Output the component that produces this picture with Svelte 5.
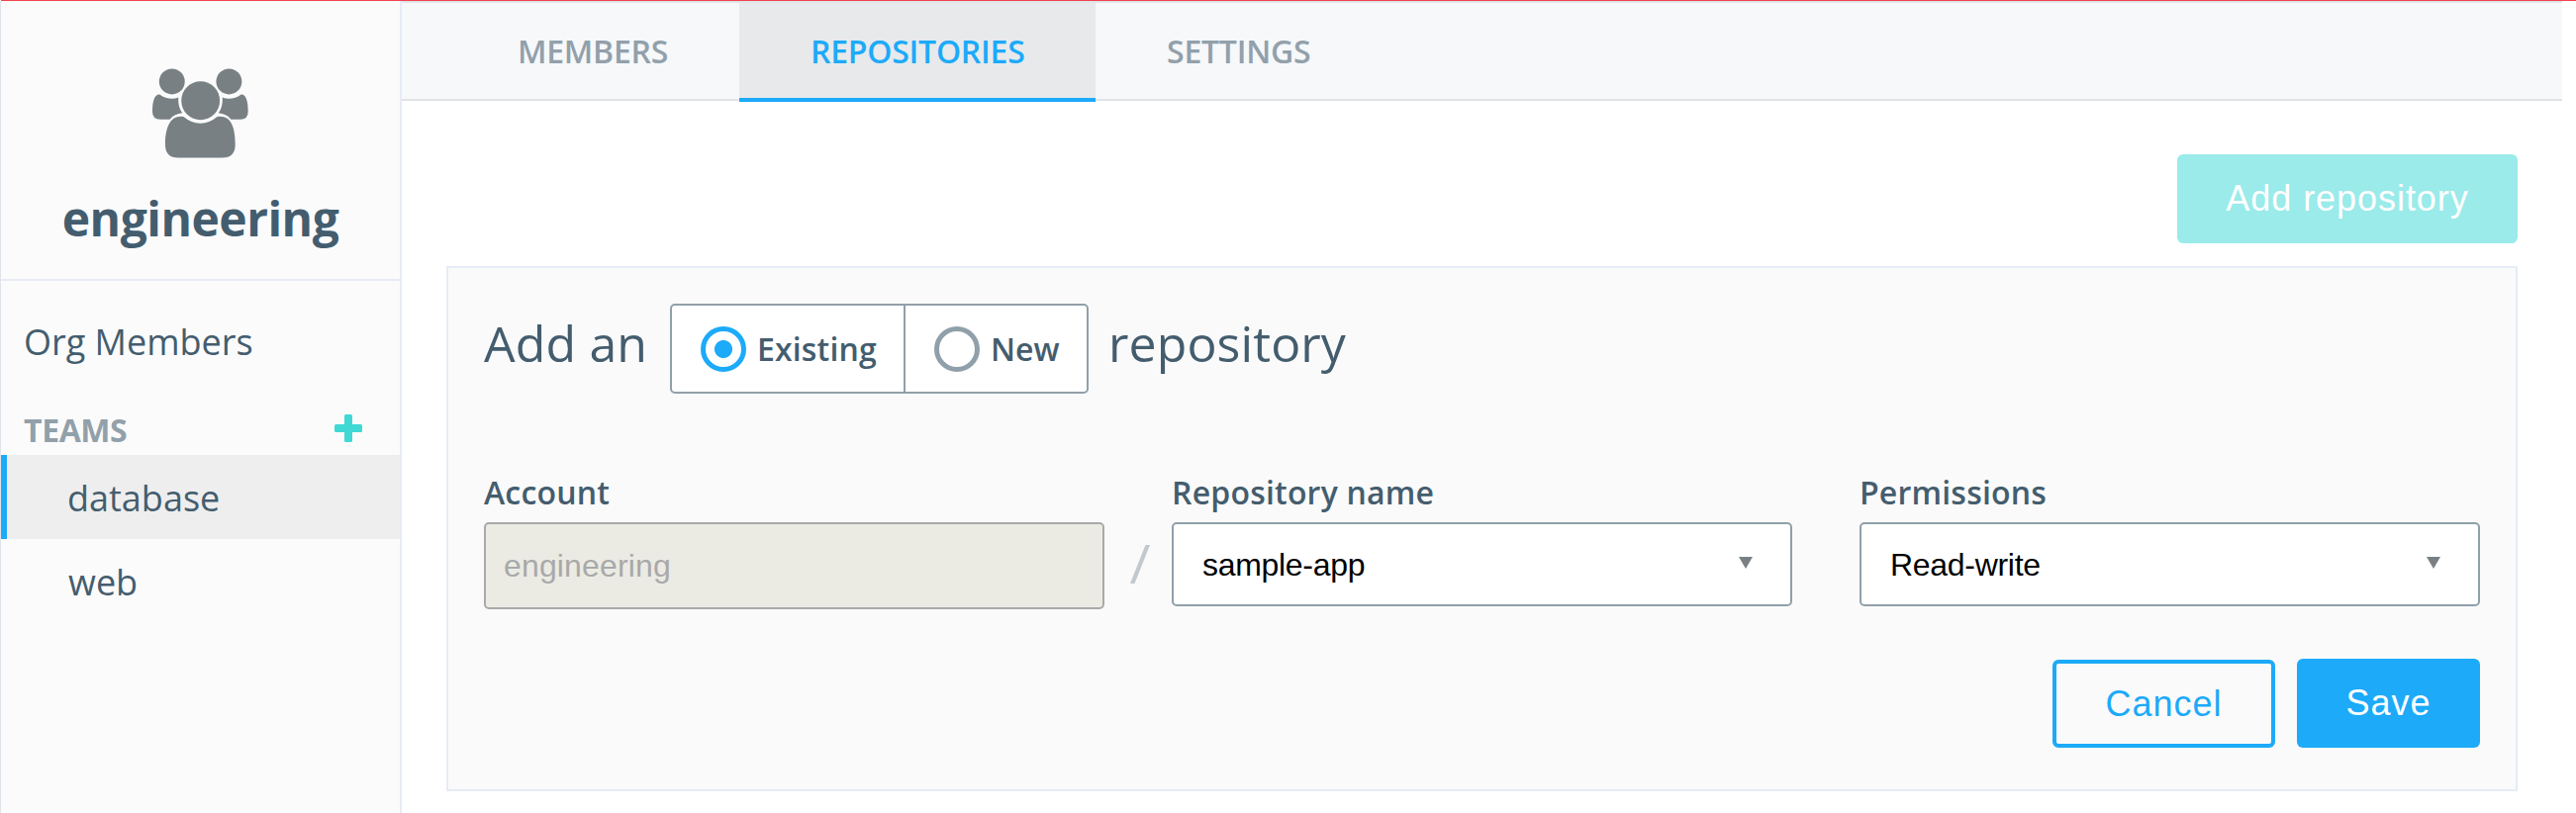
<script>
  const teams = ['database', 'web'];
  const tabs = ['MEMBERS', 'REPOSITORIES', 'SETTINGS'];
  let activeTeam = $state('database');
  let activeTab = $state('REPOSITORIES');
  let mode = $state('Existing');
</script>

<div class="page">
  <aside>
    <div class="org">
      <svg class="people" viewBox="462 208 292 273" fill="#788084">
        <circle cx="521.5" cy="248" r="39" />
        <circle cx="695" cy="248" r="39" />
        <circle cx="608.500" cy="306" r="58.500" />
        <path d="M484 287 Q502 300 521 300 Q532 300 541 296 Q539 324 553 344 Q529 346 515 363 H486 Q462 363 462 340 C462 310 467 286 484 287Z" />
        <path d="M732 287 Q714 300 695 300 Q684 300 675 296 Q677 324 663 344 Q687 346 701 363 H730 Q753 363 753 340 C753 310 748 286 732 287Z" />
        <path d="M557 355 Q580 375 608 375 Q636 375 659 355 C700 348 714 385 714 440 Q714 480 674 480 H541 Q501 480 501 440 C501 385 518 348 557 355Z" />
      </svg>
      <h1>engineering</h1>
    </div>
    <nav>
      <a class="members" href="#members">Org Members</a>
      <div class="teams-head">
        <span>TEAMS</span>
        <svg viewBox="0 0 28 28" width="28" height="28" fill="#3fd8d5">
          <rect x="10" y="0" width="8" height="28" rx="1.500" />
          <rect x="0" y="10" width="28" height="8" rx="1.500" />
        </svg>
      </div>
      {#each teams as team}
        <button class="team" class:active={team === activeTeam} onclick={() => (activeTeam = team)}>{team}</button>
      {/each}
    </nav>
  </aside>

  <main>
    <div class="tabs">
      {#each tabs as tab}
        <button class="tab" class:active={tab === activeTab} onclick={() => (activeTab = tab)}>{tab}</button>
      {/each}
    </div>

    <div class="content">
      <button class="add">Add repository</button>
      <section>
        <div class="heading">
          <span class="add-an">Add an</span>
          <div class="toggle">
            <button class="option first" onclick={() => (mode = 'Existing')}>
              <i class="radio" class:checked={mode === 'Existing'}></i><span>Existing</span>
            </button>
            <button class="option" onclick={() => (mode = 'New')}>
              <i class="radio" class:checked={mode === 'New'}></i><span>New</span>
            </button>
          </div>
          <span class="repository">repository</span>
        </div>

        <div class="fields">
          <div class="field">
            <span class="label">Account</span>
            <div class="box disabled">engineering</div>
          </div>
          <svg class="slash" viewBox="0 0 20 39" width="20" height="39">
            <path d="M15.500 0 H20 L4.500 39 H0Z" fill="#c1c9ce" />
          </svg>
          <div class="field">
            <span class="label">Repository name</span>
            <div class="box select">
              <span>sample-app</span>
              <svg viewBox="0 0 14 12" width="14" height="12"><path d="M0 0H14L7 12Z" fill="#788084" /></svg>
            </div>
          </div>
          <div class="field last">
            <span class="label">Permissions</span>
            <div class="box select">
              <span>Read-write</span>
              <svg viewBox="0 0 14 12" width="14" height="12"><path d="M0 0H14L7 12Z" fill="#788084" /></svg>
            </div>
          </div>
        </div>

        <div class="actions">
          <button class="cancel">Cancel</button>
          <button class="save">Save</button>
        </div>
      </section>
    </div>
  </main>
</div>

<style>
  * { box-sizing: border-box; }
  :global(body) { background: #fff; overflow: hidden; }
  button { margin: 0; padding: 0; border: 0; background: none; text-align: left; white-space: nowrap; }
  .page {
    display: flex;
    height: 822px;
    background: linear-gradient(#f0444f, #f0444f) 1px 0 / 100% 1px no-repeat;
    padding-top: 1px;
    font-family: "Open Sans", sans-serif;
    color: #445d6e;
  }
  aside {
    width: 406px;
    flex: none;
    background: #fbfbfb;
    border-left: 1px solid #dfe3ea;
    border-right: 2px solid #e6ebf5;
  }
  .org {
    height: 283px;
    padding-top: 68px;
    border-bottom: 2px solid #e6ebf5;
    display: flex;
    flex-direction: column;
    align-items: center;
  }
  .people { width: 97px; height: 91px; display: block; }
  h1 { margin: 28px 0 0; font-size: 48px; font-weight: 700; line-height: 66px; letter-spacing: -0.5px; }
  nav { display: flex; flex-direction: column; }
  .members {
    margin-top: 38px;
    padding-left: 23px;
    font-size: 36px;
    line-height: 48px;
    color: inherit;
    text-decoration: none;
  }
  .teams-head {
    display: flex;
    justify-content: space-between;
    margin-top: 43px;
    padding: 0 38px 0 23px;
    height: 47px;
    font-size: 32px;
    font-weight: 700;
    line-height: 44px;
    letter-spacing: -0.4px;
    color: #92a0aa;
  }
  .teams-head svg { margin-top: 6px; }
  .team {
    height: 85px;
    padding-left: 68px;
    font: 36px/87px "Open Sans", sans-serif;
    color: inherit;
  }
  .team.active { background: #eee; border-left: 6px solid #1caaf9; padding-left: 61px; }

  main { flex: 1; display: flex; flex-direction: column; }
  .tabs {
    display: flex;
    width: 2183px;
    height: 101px;
    padding-left: 45px;
    background: #f6f8fa;
    border-top: 2px solid #e3e5e8;
    border-bottom: 2px solid #e1e4e6;
  }
  .tab {
    height: 100px;
    padding: 0 72px;
    font: 600 32px/98px "Open Sans", sans-serif;
    letter-spacing: -0.25px;
    color: #92a0aa;
    border-bottom: 4px solid transparent;
  }
  .tab.active { width: 360px; background: #e7e9eb; color: #1caaf9; border-bottom-color: #1caaf9; background-clip: padding-box; }

  .content { width: 2093px; margin: 54px 0 0 45px; display: flex; flex-direction: column; }
  .add, .cancel, .save {
    text-align: center;
    font: 36px/90px "Liberation Sans", sans-serif;
    letter-spacing: 0.95px;
    border-radius: 6px;
  }
  .add { align-self: flex-end; width: 344px; height: 90px; background: #9aebea; color: #fff; }
  section {
    height: 531px;
    margin-top: 23px;
    padding: 36px 36px 0;
    background: #fafafa;
    border: 2px solid #e6ebf5;
  }
  .heading { display: flex; height: 91px; font-size: 50px; line-height: 80px; }
  .add-an { width: 188px; letter-spacing: 0.15px; }
  .toggle {
    display: flex;
    width: 423px;
    background: #fff;
    border: 2px solid #90a0aa;
    border-radius: 5px;
    margin-right: 20px;
  }
  .repository { letter-spacing: 0.1px; }
  .option {
    display: flex;
    align-items: center;
    padding-left: 29px;
    font: 600 32px/87px "Open Sans", sans-serif;
    color: #445d6e;
  }
  .option span { margin-left: 11px; height: 87px; }
  .first { width: 236px; border-right: 2px solid #90a0aa; letter-spacing: 0.15px; }
  .radio {
    width: 46px;
    height: 46px;
    border: 5px solid #90a0aa;
    border-radius: 50%;
    flex: none;
  }
  .radio.checked { border-color: #1caaf9; background: radial-gradient(circle, #1caaf9 8.600px, transparent 9.400px); }

  .fields { display: flex; margin-top: 75px; height: 143px; }
  .field { width: 627px; }
  .field.last { margin-left: 68px; }
  .label { display: block; height: 55px; font-size: 32px; font-weight: 600; line-height: 49px; letter-spacing: 0.2px; }
  .slash { margin: 78px 22px 0 26px; }
  .box {
    height: 85px;
    border: 2px solid #90a0aa;
    border-radius: 5px;
    font: 32px/83px "Liberation Sans", sans-serif;
  }
  .box.disabled {
    height: 88px;
    padding-left: 18px;
    line-height: 85px;
    letter-spacing: 0.15px;
    background: #ebebe4;
    border-color: #a9a9a9;
    color: #a9a9a9;
  }
  .select { display: flex; justify-content: space-between; padding: 0 38px 0 29px; background: #fff; color: #000; letter-spacing: -0.3px; }
  .select svg { margin-top: 33px; }
  .actions { display: flex; justify-content: flex-end; align-items: flex-end; margin-top: 50px; gap: 22px; }
  .cancel { width: 225px; height: 89px; border: 4px solid #1caaf9; color: #1caaf9; line-height: 81px; }
  .save { width: 185px; height: 90px; background: #1caaf9; color: #fff; }
</style>
